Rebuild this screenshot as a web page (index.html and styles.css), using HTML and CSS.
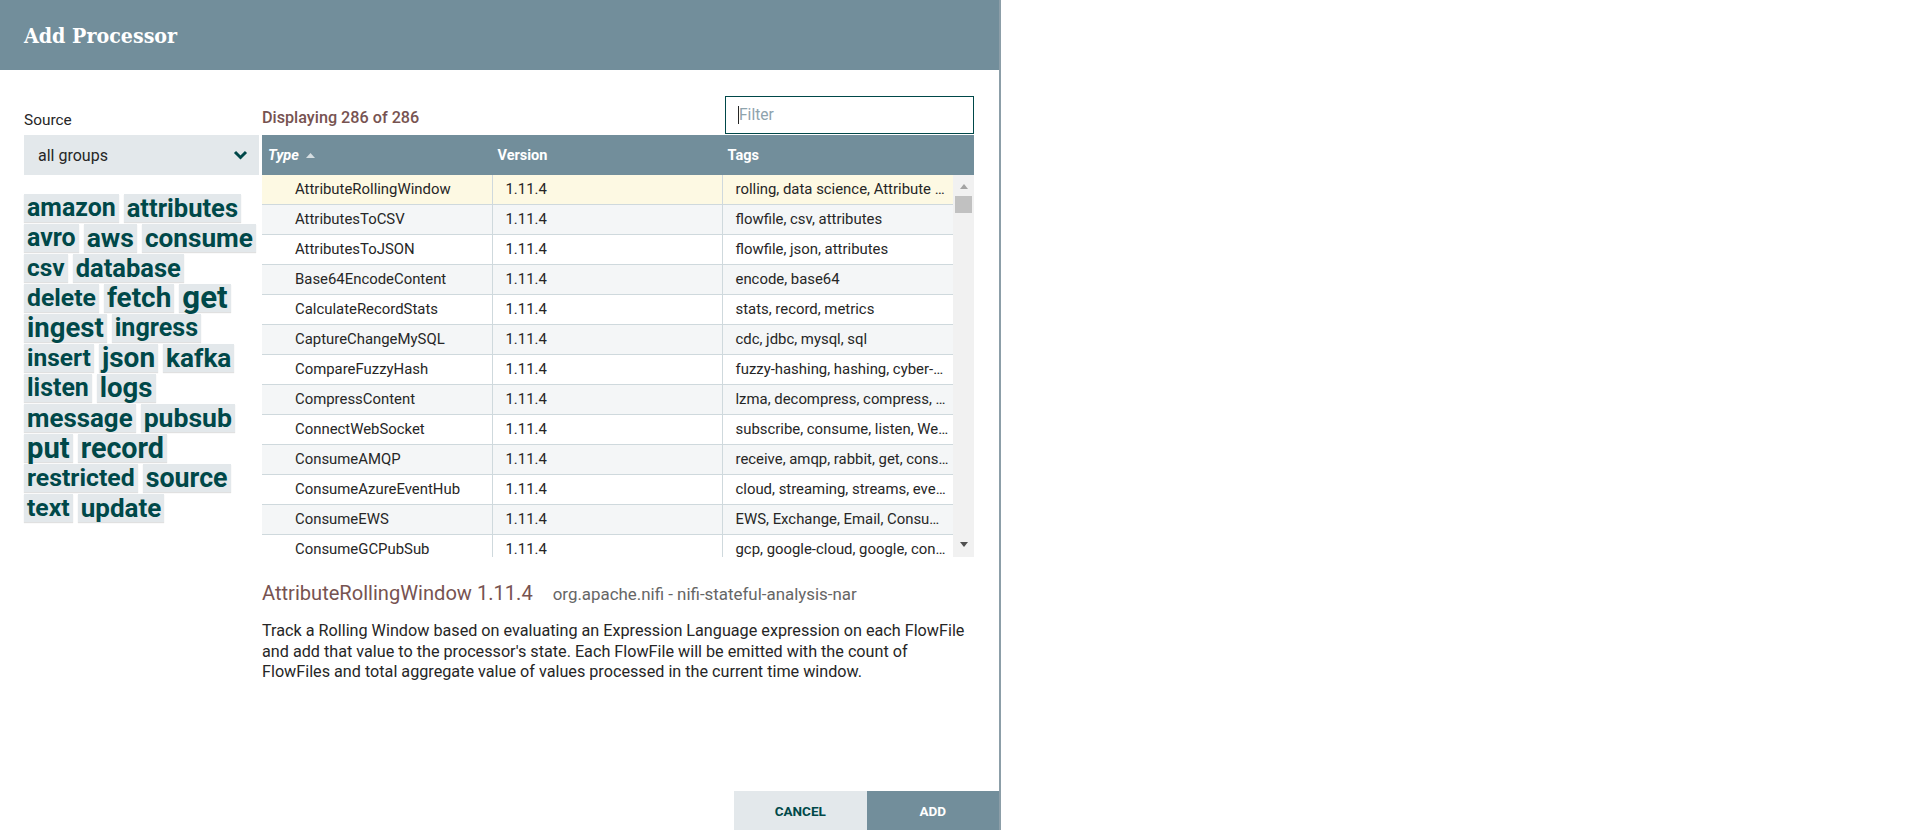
FILE: index.html
```html
<!DOCTYPE html>
<html lang="en">
<head>
<meta charset="utf-8">
<title>Add Processor</title>
<link rel="stylesheet" href="styles.css">
</head>
<body>
<div class="dialog">
  <header class="dialog-header">
    <h1 class="dialog-title">Add Processor</h1>
  </header>
  <div class="dialog-body">
    <aside class="source-col">
      <div class="field-label">Source</div>
      <div class="select">
        <span>all groups</span>
        <svg class="chevron" width="15" height="10" viewBox="0 0 15 10"><polyline points="2,2 7.5,7.5 13,2" fill="none" stroke="#004849" stroke-width="3"/></svg>
      </div>
      <ul class="tag-cloud">
        <li class="tag" style="font-size:24.9px">amazon</li>
        <li class="tag" style="font-size:25.55px">attributes</li>
        <li class="tag" style="font-size:24.95px">avro</li>
        <li class="tag" style="font-size:26.5px">aws</li>
        <li class="tag" style="font-size:26.2px">consume</li>
        <li class="tag" style="font-size:24.45px">csv</li>
        <li class="tag" style="font-size:25.5px">database</li>
        <li class="tag" style="font-size:24.75px">delete</li>
        <li class="tag" style="font-size:27.9px">fetch</li>
        <li class="tag" style="font-size:31.25px">get</li>
        <li class="tag" style="font-size:27.5px">ingest</li>
        <li class="tag" style="font-size:25.1px">ingress</li>
        <li class="tag" style="font-size:24.5px">insert</li>
        <li class="tag" style="font-size:28px">json</li>
        <li class="tag" style="font-size:26.15px">kafka</li>
        <li class="tag" style="font-size:24.9px">listen</li>
        <li class="tag" style="font-size:27.55px">logs</li>
        <li class="tag" style="font-size:25.9px">message</li>
        <li class="tag" style="font-size:26.6px">pubsub</li>
        <li class="tag" style="font-size:29.2px">put</li>
        <li class="tag" style="font-size:28.7px">record</li>
        <li class="tag" style="font-size:24.8px">restricted</li>
        <li class="tag" style="font-size:26.8px">source</li>
        <li class="tag" style="font-size:24.75px">text</li>
        <li class="tag" style="font-size:26px">update</li>
      </ul>
    </aside>
    <section class="types-col">
      <div class="types-toolbar">
        <div class="displaying">Displaying 286 of 286</div>
        <label class="filter">
          <input class="filter-input" type="text" placeholder="Filter">
        </label>
      </div>
      <div class="grid">
        <div class="grid-head">
          <div class="th th-sorted">Type
            <svg class="sort-arrow" width="9" height="5" viewBox="0 0 9 5"><polygon points="0,5 4.5,0 9,5" fill="#d5dde1"/></svg>
          </div>
          <div class="th">Version</div>
          <div class="th">Tags</div>
          <div class="th"></div>
        </div>
        <div class="grid-body">
          <div class="rows">
            <div class="row selected"><div class="cell cell-type">AttributeRollingWindow</div><div class="cell">1.11.4</div><div class="cell cell-tags">rolling, data science, Attribute Expression Language, state, window</div></div>
            <div class="row"><div class="cell cell-type">AttributesToCSV</div><div class="cell">1.11.4</div><div class="cell cell-tags">flowfile, csv, attributes</div></div>
            <div class="row"><div class="cell cell-type">AttributesToJSON</div><div class="cell">1.11.4</div><div class="cell cell-tags">flowfile, json, attributes</div></div>
            <div class="row"><div class="cell cell-type">Base64EncodeContent</div><div class="cell">1.11.4</div><div class="cell cell-tags">encode, base64</div></div>
            <div class="row"><div class="cell cell-type">CalculateRecordStats</div><div class="cell">1.11.4</div><div class="cell cell-tags">stats, record, metrics</div></div>
            <div class="row"><div class="cell cell-type">CaptureChangeMySQL</div><div class="cell">1.11.4</div><div class="cell cell-tags">cdc, jdbc, mysql, sql</div></div>
            <div class="row"><div class="cell cell-type">CompareFuzzyHash</div><div class="cell">1.11.4</div><div class="cell cell-tags">fuzzy-hashing, hashing, cyber-security</div></div>
            <div class="row"><div class="cell cell-type">CompressContent</div><div class="cell">1.11.4</div><div class="cell cell-tags">lzma, decompress, compress, snappy framed, gzip, snappy, bzip2, content</div></div>
            <div class="row"><div class="cell cell-type">ConnectWebSocket</div><div class="cell">1.11.4</div><div class="cell cell-tags">subscribe, consume, listen, WebSocket</div></div>
            <div class="row"><div class="cell cell-type">ConsumeAMQP</div><div class="cell">1.11.4</div><div class="cell cell-tags">receive, amqp, rabbit, get, consume, message</div></div>
            <div class="row"><div class="cell cell-type">ConsumeAzureEventHub</div><div class="cell">1.11.4</div><div class="cell cell-tags">cloud, streaming, streams, eventhub, events, azure, microsoft</div></div>
            <div class="row"><div class="cell cell-type">ConsumeEWS</div><div class="cell">1.11.4</div><div class="cell cell-tags">EWS, Exchange, Email, Consume, Ingest, Message, Get, Ingress</div></div>
            <div class="row"><div class="cell cell-type">ConsumeGCPubSub</div><div class="cell">1.11.4</div><div class="cell cell-tags">gcp, google-cloud, google, consume, pubsub</div></div>
          </div>
          <div class="vscroll">
            <span class="arrow-up"></span>
            <span class="thumb"></span>
            <span class="track-fill"></span>
            <span class="arrow-down"></span>
          </div>
        </div>
      </div>
      <div class="desc">
        <div class="desc-head">
          <span class="desc-title">AttributeRollingWindow 1.11.4</span>
          <span class="desc-meta">org.apache.nifi - nifi-stateful-analysis-nar</span>
        </div>
        <p class="desc-text">Track a Rolling Window based on evaluating an Expression Language expression on each FlowFile and add that value to the processor's state. Each FlowFile will be emitted with the count of FlowFiles and total aggregate value of values processed in the current time window.</p>
      </div>
    </section>
  </div>
  <footer class="dialog-footer">
    <button class="btn btn-cancel">Cancel</button>
    <button class="btn btn-add">Add</button>
  </footer>
</div>
</body>
</html>
```
FILE: styles.css
```css
* { box-sizing: border-box; }
html, body { margin: 0; height: 100%; }
body {
  font-family: Roboto, "Liberation Sans", sans-serif;
  color: #262626;
  background: #fff;
}
.dialog {
  width: 1001px;
  height: 830px;
  display: flex;
  flex-direction: column;
  border-right: 2px solid #8c9ea8;
}
.dialog-header {
  height: 70px;
  flex: none;
  background: #728e9b;
  display: flex;
  align-items: center;
  padding-left: 24px;
}
.dialog-title {
  margin: 0;
  font-family: "DejaVu Serif Condensed", "DejaVu Serif", serif;
  font-stretch: condensed;
  font-weight: 700;
  font-size: 21.2px;
  color: #fff;
}
.dialog-body {
  flex: 1;
  min-height: 0;
  display: flex;
  gap: 3px;
  padding-left: 24px;
}
.source-col { width: 235px; padding-top: 40px; }
.field-label { font-size: 15.4px; line-height: 20px; margin-bottom: 5px; }
.select {
  height: 40px;
  background: #e3e8eb;
  display: flex;
  align-items: center;
  justify-content: space-between;
  padding: 0 11px 0 14px;
  font-size: 16px;
}
.tag-cloud {
  list-style: none;
  margin: 19px 0 0;
  padding: 0;
  display: flex;
  flex-wrap: wrap;
  gap: 2px 5px;
}
.tag {
  height: 28px;
  line-height: 28px;
  padding: 0 3px;
  background: #e3e8eb;
  color: #004849;
  font-weight: 700;
  box-shadow: 0 1px 1px rgba(0, 0, 0, 0.12);
  white-space: nowrap;
}
.types-col {
  width: 712px;
  padding-top: 26px;
  display: flex;
  flex-direction: column;
}
.types-toolbar {
  height: 38px;
  display: flex;
  justify-content: space-between;
  align-items: flex-end;
  margin-bottom: 1px;
}
.displaying {
  color: #775351;
  font-weight: 500;
  font-size: 16.2px;
  line-height: 20px;
  padding-bottom: 6px;
}
.filter {
  position: relative;
  width: 249px;
  height: 38px;
  border: 1px solid #004849;
  display: block;
}
.filter::before {
  content: "";
  position: absolute;
  left: 12px;
  top: 9px;
  width: 1px;
  height: 18px;
  background: #262626;
}
.filter-input {
  width: 100%;
  height: 100%;
  border: 0;
  outline: none;
  padding: 0 0 0 13px;
  font-family: Roboto, sans-serif;
  font-size: 15.6px;
  color: #262626;
  background: #fff;
}
.filter-input::placeholder { color: #8ea3ad; }
.grid-head {
  height: 40px;
  background: #728e9b;
  display: grid;
  grid-template-columns: 230.5px 230px 231px 1fr;
  align-items: center;
  color: #fff;
  font-weight: 700;
  font-size: 14.5px;
}
.th { padding-left: 5px; display: flex; align-items: center; gap: 7px; }
.th-sorted { padding-left: 6px; font-style: italic; }
.grid-body { display: flex; height: 382px; }
.rows { flex: 1; overflow: hidden; }
.row {
  display: grid;
  grid-template-columns: 230.5px 230px 1fr;
  height: 30px;
  border-bottom: 1px solid #cfd9dd;
}
.row:nth-child(even) { background: #f4f6f7; }
.row.selected { background: #fdf9e3; }
.cell {
  padding: 0 4px 0 13px;
  line-height: 29px;
  font-size: 14.9px;
  white-space: nowrap;
  overflow: hidden;
  text-overflow: ellipsis;
  border-right: 1px solid #cfd9dd;
}
.cell-type { padding-left: 33px; }
.cell-tags { border-right: 0; }
.vscroll {
  width: 21px;
  background: #f1f1f1;
  display: flex;
  flex-direction: column;
  align-items: center;
}
.arrow-up {
  margin-top: 9px;
  width: 0; height: 0;
  border-left: 4.5px solid transparent;
  border-right: 4.5px solid transparent;
  border-bottom: 5px solid #a3a3a3;
}
.thumb { margin-top: 7px; width: 17px; height: 17px; background: #c1c1c1; }
.track-fill { flex: 1; }
.arrow-down {
  margin-bottom: 10px;
  width: 0; height: 0;
  border-left: 4.5px solid transparent;
  border-right: 4.5px solid transparent;
  border-top: 5px solid #505050;
}
.desc { padding-top: 24px; }
.desc-head { display: flex; align-items: baseline; gap: 20px; }
.desc-title { font-size: 20.1px; line-height: 24px; color: #775351; }
.desc-meta { font-size: 16.9px; color: #666; }
.desc-text {
  margin: 16px 0 0;
  width: 712px;
  font-size: 16.2px;
  line-height: 20.5px;
}
.dialog-footer {
  height: 39px;
  flex: none;
  display: flex;
  justify-content: flex-end;
}
.btn {
  width: 132.5px;
  border: 0;
  font-family: Roboto, sans-serif;
  font-weight: 700;
  font-size: 13.5px;
  text-transform: uppercase;
}
.btn-cancel { background: #e3e8eb; color: #004849; }
.btn-add { background: #728e9b; color: #fff; }
```
